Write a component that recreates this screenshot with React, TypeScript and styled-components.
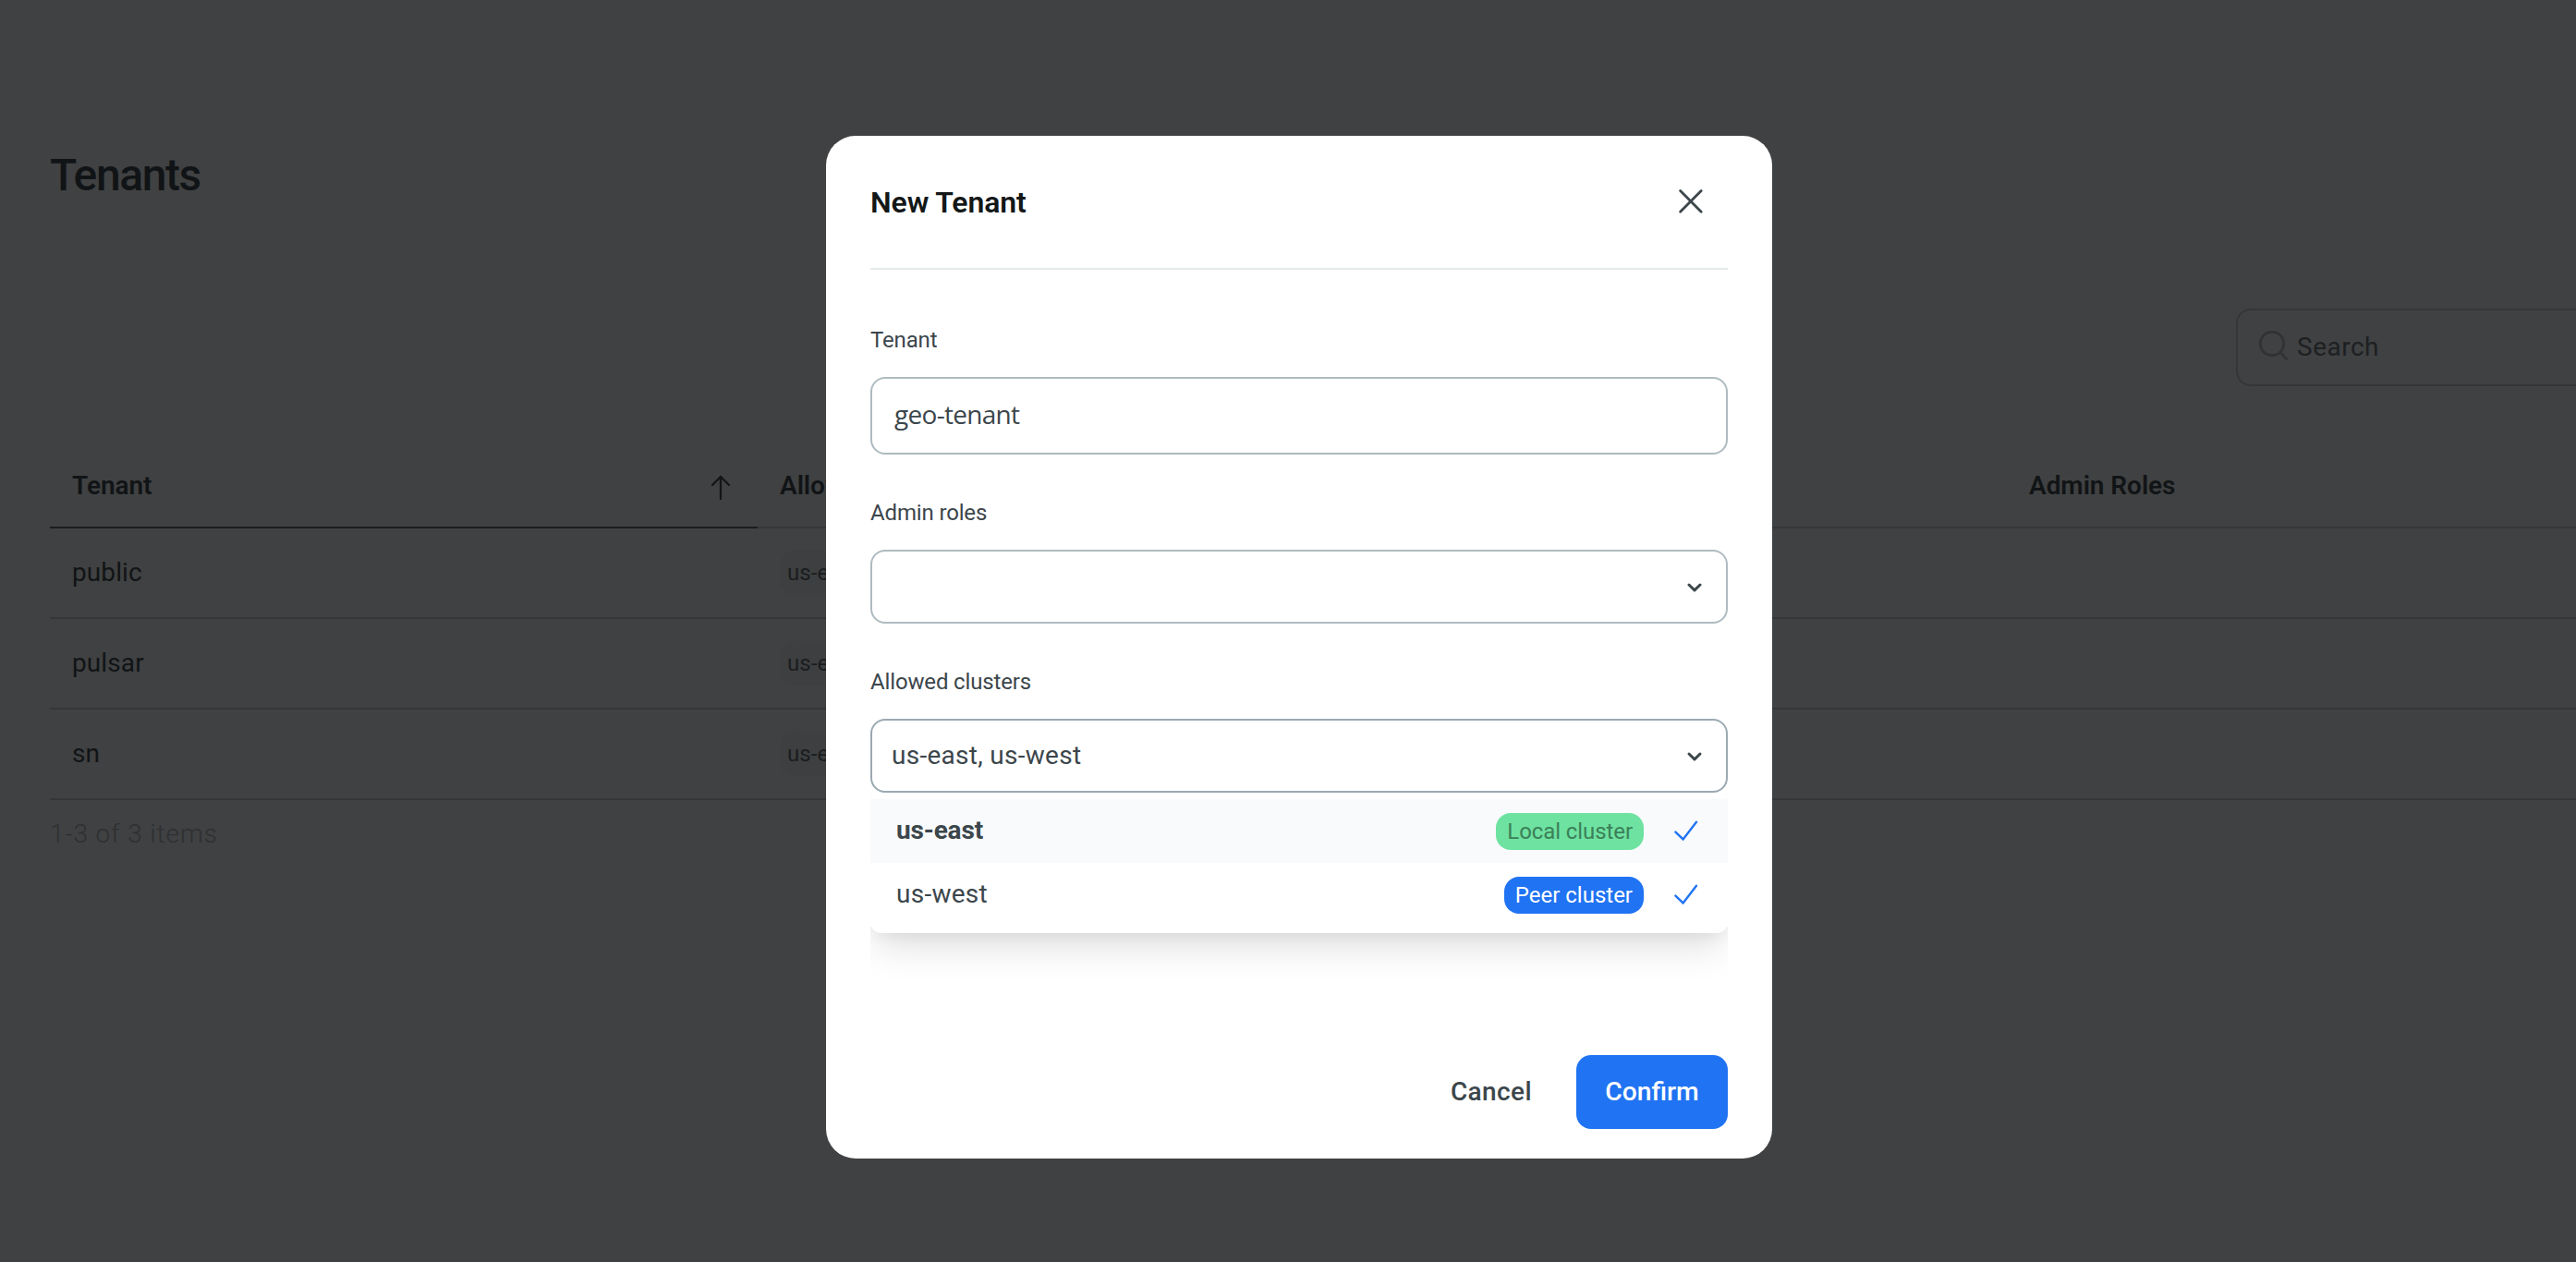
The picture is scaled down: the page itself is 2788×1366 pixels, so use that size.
import React from 'react';
import styled, { createGlobalStyle } from 'styled-components';

const GlobalStyle = createGlobalStyle`
  * { box-sizing: border-box; }
  body {
    margin: 0;
    background: #404142;
    font-family: Roboto, "Liberation Sans", sans-serif;
    overflow: hidden;
  }
  button, input { font: inherit; }
`;

/* ---------- dimmed page ---------- */

const Page = styled.main`
  height: 1366px;
  padding: 160px 0 0 54px;
  color: #111416;
  overflow: hidden;
`;

const PageTitle = styled.h1`
  margin: 0;
  font-size: 48px;
  line-height: 60px;
  font-weight: 500;
  letter-spacing: -1.4px;
`;

const Toolbar = styled.div`
  display: flex;
  justify-content: flex-end;
  margin-top: 114px;
`;

const SearchBox = styled.label`
  display: flex;
  align-items: center;
  width: 368px;
  height: 84px;
  padding: 0 0 2px 21px;
  border: 2px solid #343638;
  border-right: 0;
  border-radius: 16px 0 0 16px;
  color: #1d2022;
  font-size: 28px;
  letter-spacing: 0.5px;

  svg { margin: -2px 8px 0 0; }
`;

const Table = styled.div`
  margin-top: 64px;
`;

const Row = styled.div`
  display: grid;
  grid-template-columns: 766px 1352px 1fr;
`;

const HeadCell = styled.div<{ $sorted?: boolean }>`
  display: flex;
  align-items: center;
  justify-content: space-between;
  height: 90px;
  padding: 0 29px 2px 24px;
  border-bottom: 2px solid ${p => (p.$sorted ? '#1b1d1e' : '#343638')};
  font-size: 28px;
  font-weight: 600;
  letter-spacing: -0.05px;

  svg { margin-top: 5px; }
`;

const Cell = styled.div`
  display: flex;
  align-items: center;
  height: 98px;
  padding: 0 24px 2px;
  border-bottom: 2px solid #343638;
  font-size: 28px;
  letter-spacing: 0.1px;
`;

const Pill = styled.span`
  height: 48px;
  margin-top: 2px;
  padding: 0 8px;
  border-radius: 16px;
  background: #3e3f40;
  color: #1a1d1f;
  font-size: 24px;
  line-height: 48px;
`;

const Pager = styled.div`
  margin-top: 17px;
  font-size: 28px;
  line-height: 40px;
  font-weight: 300;
  letter-spacing: 0.92px;
  color: #2e3032;
`;

/* ---------- dialog ---------- */

const Overlay = styled.div`
  position: fixed;
  inset: 0;
  display: flex;
  justify-content: center;
  align-items: flex-start;
  padding: 147px 0 0 24px;
`;

const Modal = styled.section`
  display: flex;
  flex-direction: column;
  width: 1024px;
  height: 1107px;
  padding: 0 48px 32px;
  border-radius: 32px;
  background: #fff;
  color: #3c464b;
`;

const ModalHeader = styled.header`
  display: flex;
  align-items: center;
  justify-content: space-between;
  height: 145px;
  padding-right: 26px;
  border-bottom: 2px solid #e5ebea;
  margin-bottom: 56px;
`;

const ModalTitle = styled.h2`
  margin: 0;
  font-size: 32px;
  line-height: 40px;
  font-weight: 600;
  letter-spacing: -0.1px;
  color: #131717;
`;

const IconButton = styled.button`
  display: flex;
  padding: 0 0 2px;
  border: 0;
  background: none;
`;

const Field = styled.div`
  position: relative;
  margin-bottom: 43px;
`;

const Label = styled.label`
  display: block;
  margin-bottom: 20px;
  font-size: 24px;
  line-height: 40px;
  letter-spacing: -0.15px;
`;

const TextInput = styled.input`
  display: block;
  width: 100%;
  height: 84px;
  padding: 0 24px 4px;
  border: 2px solid #aebbc0;
  border-radius: 16px;
  outline: 0;
  background: #fff;
  color: #3c464b;
  font-family: "Open Sans", sans-serif;
  font-size: 28px;
  letter-spacing: -0.7px;
`;

const SelectBox = styled.div<{ $open?: boolean }>`
  display: flex;
  align-items: center;
  justify-content: space-between;
  height: 80px;
  padding: 0 25px 1px 21px;
  border: 2px solid ${p => (p.$open ? '#9ba9b2' : '#aebbc0')};
  border-radius: 16px;
  font-size: 28px;
  letter-spacing: 0.28px;

  svg { margin-top: 2px; }
`;

const Options = styled.div`
  position: absolute;
  top: 100%;
  left: 0;
  right: 0;
  padding: 7px 0;
  border-radius: 12px;
  background: #fff;
  box-shadow: 0 20px 40px -5px rgba(0, 0, 0, 0.12), 0 8px 16px -4px rgba(0, 0, 0, 0.06);
  clip-path: inset(0 0 -60px 0);
`;

const Option = styled.div<{ $active?: boolean }>`
  display: flex;
  align-items: center;
  height: 69px;
  padding: 0 32px 0 28px;
  background: ${p => (p.$active ? '#f8fafc' : '#fff')};
  font-size: 28px;
  font-weight: ${p => (p.$active ? 700 : 400)};
  letter-spacing: ${p => (p.$active ? '-0.15px' : '0.25px')};
`;

const OptionName = styled.span`
  flex: 1;
  padding-bottom: 2px;
`;

const Badge = styled.span<{ $kind: 'local' | 'peer' }>`
  height: 40px;
  margin-right: 32px;
  padding: 0 12px;
  border-radius: 16px;
  background: ${p => (p.$kind === 'local' ? '#6ee2a0' : '#2073f2')};
  color: ${p => (p.$kind === 'local' ? '#3b8059' : '#fff')};
  font-size: 24px;
  font-weight: 400;
  line-height: 40px;
  letter-spacing: ${p => (p.$kind === 'local' ? '-0.08px' : '0')};
`;

const Footer = styled.footer`
  display: flex;
  justify-content: flex-end;
  gap: 12px;
  margin-top: auto;
`;

const Button = styled.button<{ $primary?: boolean }>`
  width: ${p => (p.$primary ? '164px' : '160px')};
  height: 80px;
  padding: 0 0 2px;
  border: 0;
  border-radius: 16px;
  background: ${p => (p.$primary ? '#2073f2' : 'transparent')};
  color: ${p => (p.$primary ? '#fff' : '#3c464b')};
  font-size: ${p => (p.$primary ? '28.3px' : '28px')};
  font-weight: 500;
  letter-spacing: ${p => (p.$primary ? 'normal' : '0.4px')};
`;

const Chevron = () => (
  <svg width="18" height="12" viewBox="0 0 18 12" fill="none" stroke="#3c464b" strokeWidth="3" strokeLinecap="round" strokeLinejoin="round">
    <path d="M3 3 L9 8.8 L15 3" />
  </svg>
);

const Check = () => (
  <svg width="27" height="24" viewBox="0 0 27 24" fill="none" stroke="#2073f2" strokeWidth="2.4" strokeLinecap="round" strokeLinejoin="miter">
    <path d="M2.4 12.6 L10.6 20.4 L25 1.8" />
  </svg>
);

const tenants = ['public', 'pulsar', 'sn'];

const clusters: { name: string; kind: 'local' | 'peer'; tag: string; active?: boolean }[] = [
  { name: 'us-east', kind: 'local', tag: 'Local cluster', active: true },
  { name: 'us-west', kind: 'peer', tag: 'Peer cluster' },
];

export default function App() {
  return (
    <>
      <GlobalStyle />
      <Page>
        <PageTitle>Tenants</PageTitle>
        <Toolbar>
          <SearchBox>
            <svg width="35" height="36" viewBox="0 0 35 36" fill="none" stroke="#303335" strokeWidth="2.8">
              <circle cx="16" cy="16" r="12.7" />
              <path d="M25 25.5 L32.5 33.5" />
            </svg>
            Search
          </SearchBox>
        </Toolbar>
        <Table>
          <Row>
            <HeadCell $sorted>
              Tenant
              <svg width="22" height="28" viewBox="0 0 22 28" fill="none" stroke="#131517" strokeWidth="2.3" strokeLinecap="round" strokeLinejoin="round">
                <path d="M11 26 V2 M2 11 L11 2 L20 11" />
              </svg>
            </HeadCell>
            <HeadCell>Allowed Clusters</HeadCell>
            <HeadCell>Admin Roles</HeadCell>
          </Row>
          {tenants.map(name => (
            <Row key={name}>
              <Cell>{name}</Cell>
              <Cell><Pill>us-east</Pill></Cell>
              <Cell />
            </Row>
          ))}
        </Table>
        <Pager>1-3 of 3 items</Pager>
      </Page>

      <Overlay>
        <Modal role="dialog">
          <ModalHeader>
            <ModalTitle>New Tenant</ModalTitle>
            <IconButton aria-label="Close">
              <svg width="28" height="28" viewBox="0 0 28 28" fill="none" stroke="#3c464b" strokeWidth="2.8" strokeLinecap="round">
                <path d="M2.6 2.6 L25.2 25.2 M25.2 2.6 L2.6 25.2" />
              </svg>
            </IconButton>
          </ModalHeader>
          <Field>
            <Label>Tenant</Label>
            <TextInput defaultValue="geo-tenant" spellCheck={false} />
          </Field>
          <Field>
            <Label>Admin roles</Label>
            <SelectBox><span /><Chevron /></SelectBox>
          </Field>
          <Field>
            <Label>Allowed clusters</Label>
            <SelectBox $open>us-east, us-west<Chevron /></SelectBox>
            <Options>
              {clusters.map(c => (
                <Option key={c.name} $active={c.active}>
                  <OptionName>{c.name}</OptionName>
                  <Badge $kind={c.kind}>{c.tag}</Badge>
                  <Check />
                </Option>
              ))}
            </Options>
          </Field>
          <Footer>
            <Button>Cancel</Button>
            <Button $primary>Confirm</Button>
          </Footer>
        </Modal>
      </Overlay>
    </>
  );
}
